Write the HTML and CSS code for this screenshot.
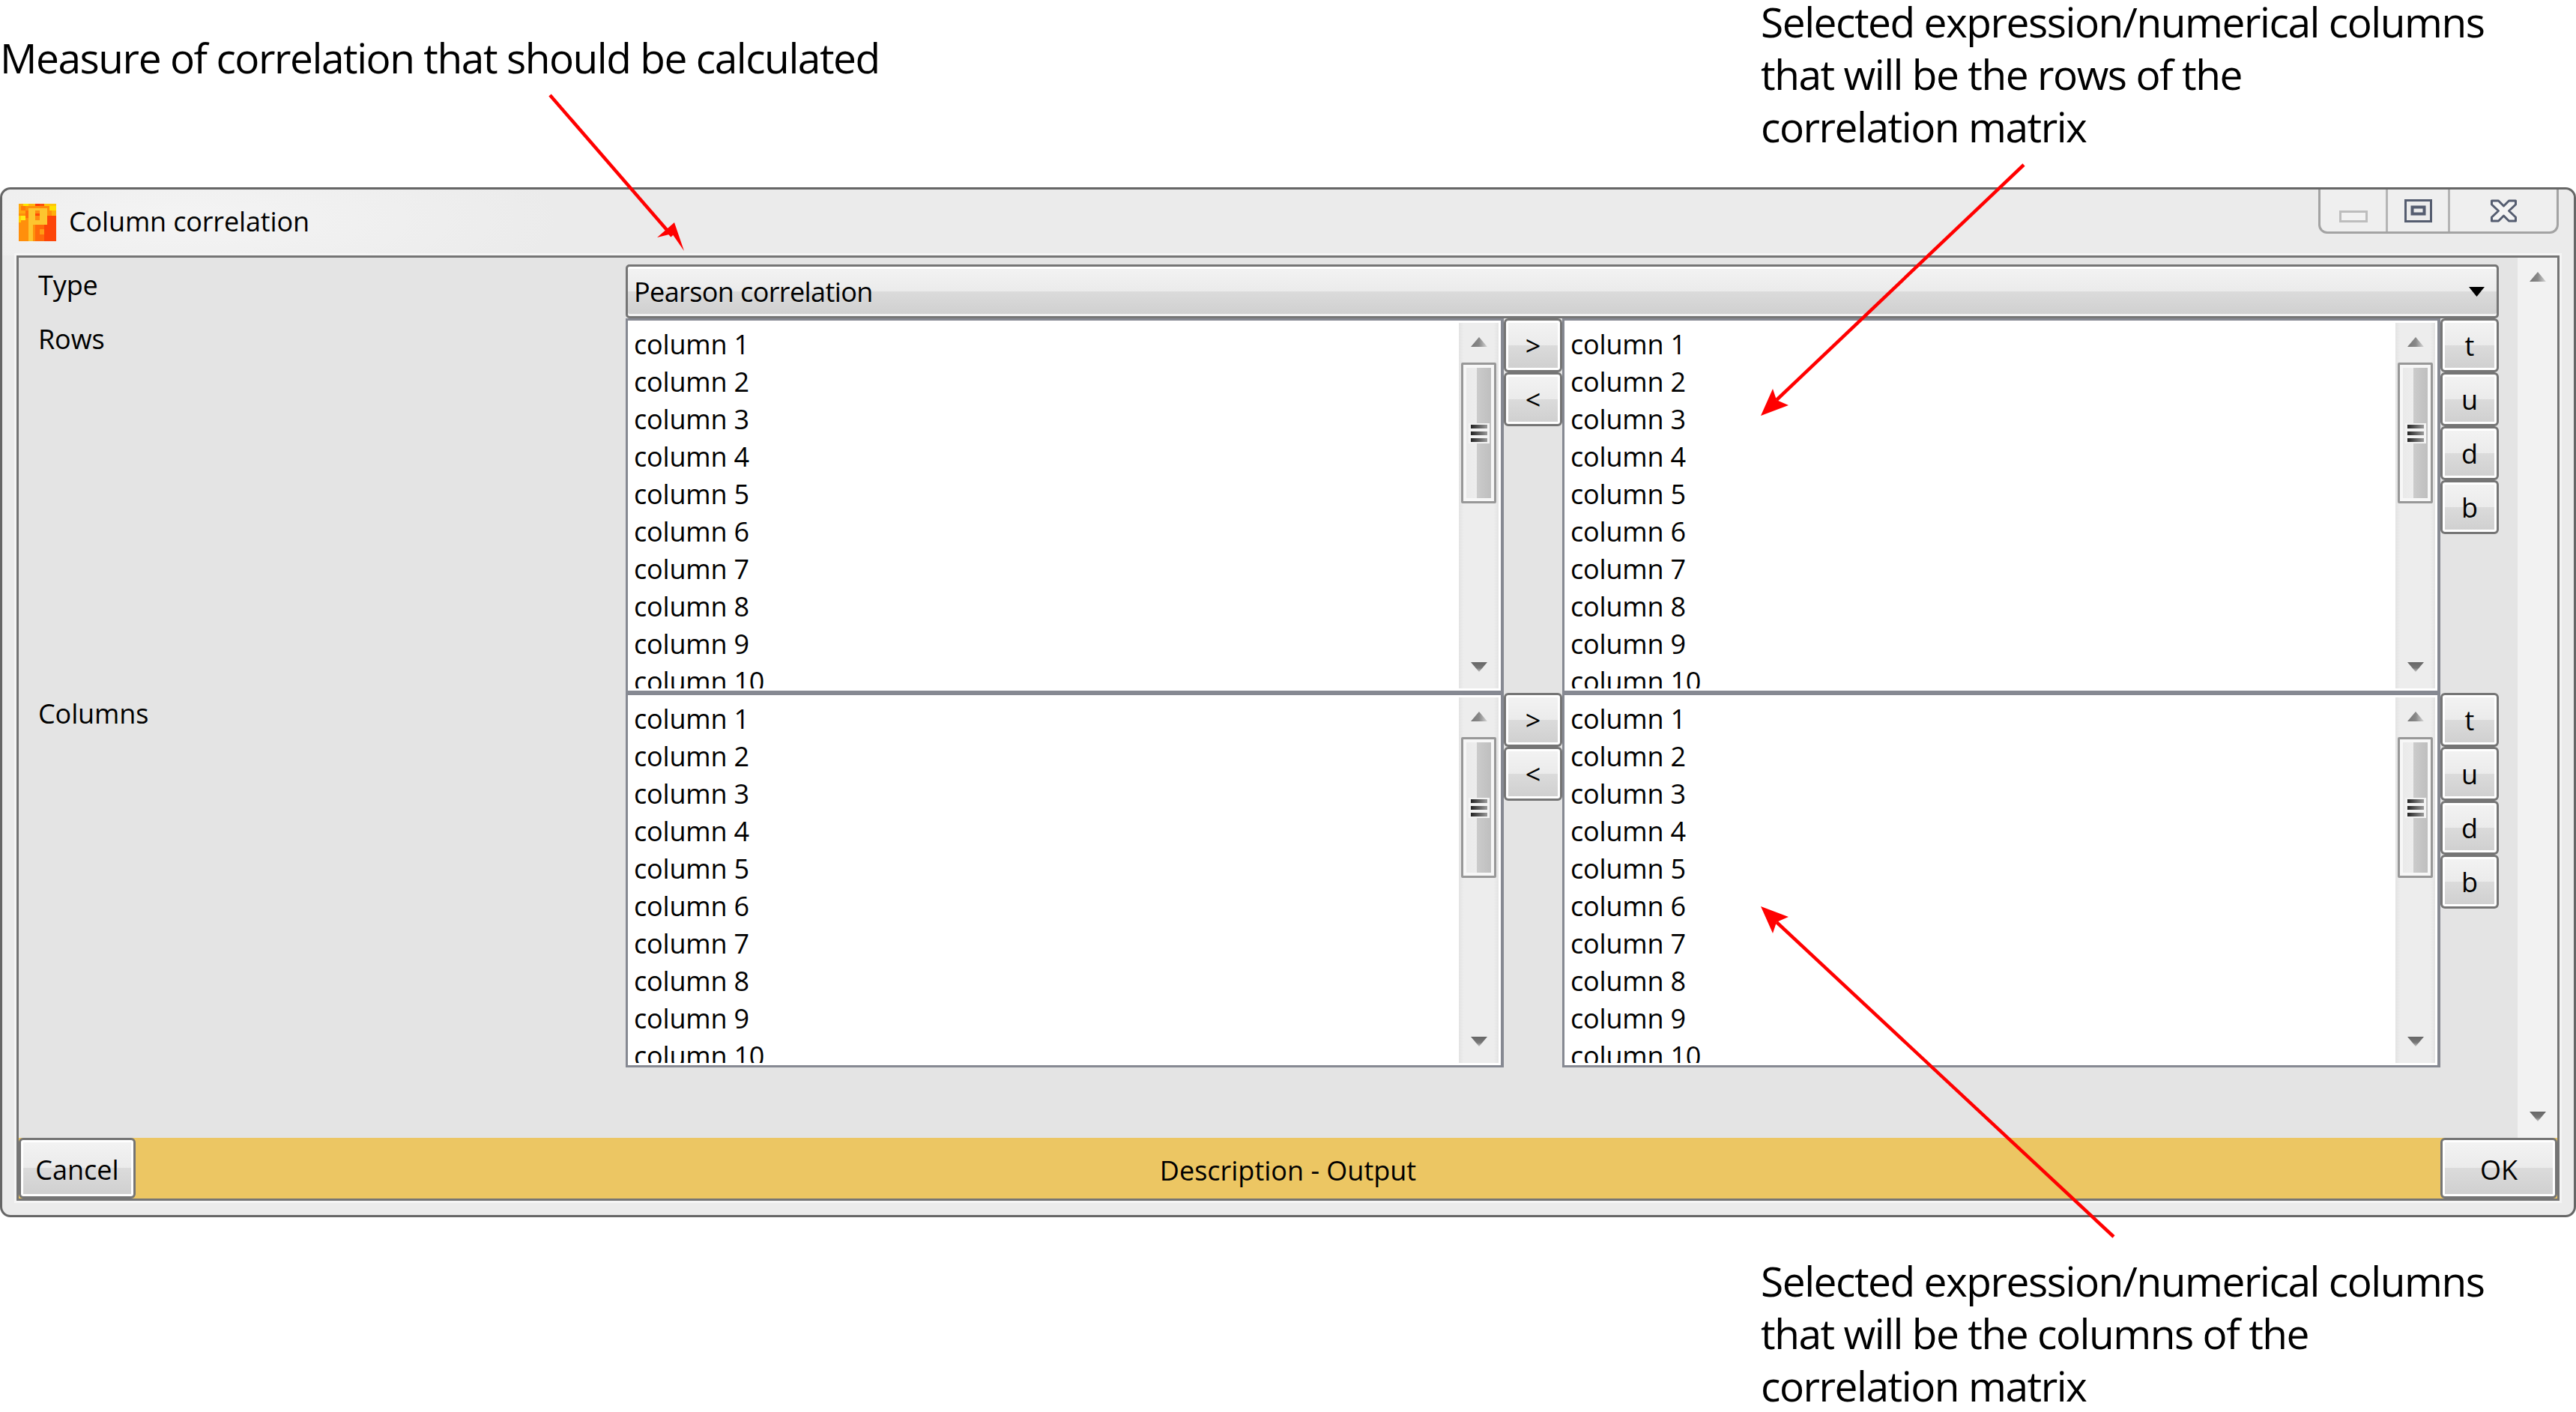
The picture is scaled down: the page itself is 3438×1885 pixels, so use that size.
FILE: index.html
```html
<!DOCTYPE html>
<html lang="en">
<head>
<meta charset="utf-8">
<title>Column correlation</title>
<link rel="stylesheet" href="styles.css">
</head>
<body>
<svg class="defs" width="0" height="0" aria-hidden="true">
  <defs>
    <linearGradient id="upg" x1="0" x2="1" y1="0" y2="0"><stop offset="0" stop-color="#777"/><stop offset=".5" stop-color="#888"/><stop offset="1" stop-color="#d5d5d5"/></linearGradient>
    <linearGradient id="dng" x1="0" x2="0" y1="0" y2="1"><stop offset="0" stop-color="#666"/><stop offset=".6" stop-color="#777"/><stop offset="1" stop-color="#c5c5c5"/></linearGradient>
    <symbol id="up" viewBox="0 0 22 13"><polygon points="11,0 22,13 0,13" fill="url(#upg)"/></symbol>
    <symbol id="down" viewBox="0 0 22 13"><polygon points="0,0 22,0 11,13" fill="url(#dng)"/></symbol>
  </defs>
</svg>

<header class="notes notes-top">
  <p class="note note-single">Measure of correlation that should be calculated</p>
  <p class="note note-raised">Selected expression/numerical columns<br>that will be the rows of the<br>correlation matrix</p>
</header>

<section class="window">
  <div class="titlebar">
    <svg class="app-icon" viewBox="0 0 16 16" shape-rendering="crispEdges" aria-hidden="true">
      <rect width="16" height="16" fill="#ff8f0c"/>
      <rect x="0" y="0" width="3" height="4" fill="#ffa70e"/>
      <rect x="2" y="0" width="2" height="1" fill="#ffe600"/>
      <rect x="0" y="5" width="1" height="3" fill="#ffd200"/>
      <rect x="1" y="1" width="2" height="2" fill="#ff7a0a"/>
      <rect x="1" y="5" width="2" height="2" fill="#ffec18"/>
      <rect x="3" y="3" width="1" height="3" fill="#ff6f0a"/>
      <rect x="4" y="0" width="3" height="1" fill="#ffb80d"/>
      <rect x="7" y="0" width="2" height="1" fill="#ff3c08"/>
      <rect x="9" y="0" width="2" height="1" fill="#ff5208"/>
      <rect x="11" y="0" width="5" height="1" fill="#ffc50a"/>
      <rect x="13" y="1" width="3" height="2" fill="#ffe000"/>
      <rect x="14" y="3" width="2" height="2" fill="#ffae0a"/>
      <rect x="9" y="1" width="4" height="1" fill="#ff8a0c"/>
      <rect x="11" y="5" width="5" height="11" fill="#fd4508"/>
      <rect x="7" y="9" width="4" height="7" fill="#ff6a0a"/>
      <rect x="9" y="11" width="2" height="2" fill="#ff9a14"/>
      <rect x="4" y="2" width="2" height="14" fill="#fdc52f"/>
      <rect x="4" y="2" width="7" height="1" fill="#fdc52f"/>
      <rect x="9" y="2" width="3" height="6" fill="#fdc52f"/>
      <rect x="6" y="7" width="6" height="2" fill="#fdc52f"/>
      <rect x="6" y="3" width="1" height="4" fill="#fdc52f"/>
      <rect x="7" y="3" width="2" height="4" fill="#ff8a10"/>
      <rect x="7" y="4" width="2" height="1" fill="#ff4a08"/>
    </svg>
    <span class="title">Column correlation</span>
    <div class="caption">
      <div class="cap cap-min">
        <svg class="cap-icon-min" viewBox="0 0 38 16" aria-hidden="true"><rect x="1.5" y="1.5" width="35" height="13" fill="#f2f2f2" stroke="#bdbdbd" stroke-width="3"/></svg>
      </div>
      <div class="cap cap-max">
        <svg class="cap-icon" viewBox="0 0 37 31" aria-hidden="true">
          <rect x="1.5" y="1.5" width="34" height="28" fill="#ececec" stroke="#555d70" stroke-width="3"/>
          <rect x="10.5" y="10.5" width="16" height="9" fill="#ececec" stroke="#555d70" stroke-width="4"/>
        </svg>
      </div>
      <div class="cap cap-close">
        <svg class="cap-icon" viewBox="0 0 36 31" aria-hidden="true">
          <polygon points="2,2 11,2 18,9 25,2 34,2 34,7 25,15.500 34,24 34,29 25,29 18,22 11,29 2,29 2,24 11,15.500 2,7" fill="#f4f4f4" stroke="#555d70" stroke-width="3" stroke-linejoin="round"/>
        </svg>
      </div>
    </div>
  </div>

  <div class="content">
    <div class="main">
      <div class="form">
        <div class="label">Type</div>
        <div class="combo">
          <span class="combo-text">Pearson correlation</span>
          <svg class="combo-arrow" viewBox="0 0 21 13" aria-hidden="true"><polygon points="0,0 21,0 10.500,13" fill="#000"/></svg>
        </div>

        <div class="label">Rows</div>
        <div class="picker">
          <div class="list">
            <div class="items">
              <div class="item">column 1</div><div class="item">column 2</div><div class="item">column 3</div><div class="item">column 4</div><div class="item">column 5</div><div class="item">column 6</div><div class="item">column 7</div><div class="item">column 8</div><div class="item">column 9</div><div class="item">column 10</div>
            </div>
            <div class="vscroll">
              <svg class="arrow arrow-up"><use href="#up"/></svg>
              <div class="thumb"><div class="grip"><i></i><i></i><i></i></div></div>
              <svg class="arrow arrow-down"><use href="#down"/></svg>
            </div>
          </div>
          <div class="btns"><button class="btn">&gt;</button><button class="btn">&lt;</button></div>
          <div class="list">
            <div class="items">
              <div class="item">column 1</div><div class="item">column 2</div><div class="item">column 3</div><div class="item">column 4</div><div class="item">column 5</div><div class="item">column 6</div><div class="item">column 7</div><div class="item">column 8</div><div class="item">column 9</div><div class="item">column 10</div>
            </div>
            <div class="vscroll">
              <svg class="arrow arrow-up"><use href="#up"/></svg>
              <div class="thumb"><div class="grip"><i></i><i></i><i></i></div></div>
              <svg class="arrow arrow-down"><use href="#down"/></svg>
            </div>
          </div>
          <div class="btns"><button class="btn">t</button><button class="btn">u</button><button class="btn">d</button><button class="btn">b</button></div>
        </div>

        <div class="label">Columns</div>
        <div class="picker">
          <div class="list">
            <div class="items">
              <div class="item">column 1</div><div class="item">column 2</div><div class="item">column 3</div><div class="item">column 4</div><div class="item">column 5</div><div class="item">column 6</div><div class="item">column 7</div><div class="item">column 8</div><div class="item">column 9</div><div class="item">column 10</div>
            </div>
            <div class="vscroll">
              <svg class="arrow arrow-up"><use href="#up"/></svg>
              <div class="thumb"><div class="grip"><i></i><i></i><i></i></div></div>
              <svg class="arrow arrow-down"><use href="#down"/></svg>
            </div>
          </div>
          <div class="btns"><button class="btn">&gt;</button><button class="btn">&lt;</button></div>
          <div class="list">
            <div class="items">
              <div class="item">column 1</div><div class="item">column 2</div><div class="item">column 3</div><div class="item">column 4</div><div class="item">column 5</div><div class="item">column 6</div><div class="item">column 7</div><div class="item">column 8</div><div class="item">column 9</div><div class="item">column 10</div>
            </div>
            <div class="vscroll">
              <svg class="arrow arrow-up"><use href="#up"/></svg>
              <div class="thumb"><div class="grip"><i></i><i></i><i></i></div></div>
              <svg class="arrow arrow-down"><use href="#down"/></svg>
            </div>
          </div>
          <div class="btns"><button class="btn">t</button><button class="btn">u</button><button class="btn">d</button><button class="btn">b</button></div>
        </div>
      </div>
      <div class="page-scroll">
        <svg class="arrow arrow-up"><use href="#up"/></svg>
        <svg class="arrow arrow-down"><use href="#down"/></svg>
      </div>
    </div>
    <footer class="footer">
      <button class="btn btn-wide">Cancel</button>
      <div class="status">Description - Output</div>
      <button class="btn btn-wide">OK</button>
    </footer>
  </div>
</section>

<footer class="notes notes-bottom">
  <p class="note">Selected expression/numerical columns<br>that will be the columns of the<br>correlation matrix</p>
</footer>

<svg class="callouts" viewBox="0 0 3438 1885" aria-hidden="true">
  <line x1="734" y1="127" x2="897" y2="315"/>
  <polygon points="913,335 900,297 877,317 897,312"/>
  <line x1="2701" y1="220" x2="2371" y2="534"/>
  <polygon points="2350,555 2366,519 2371,534 2387,541"/>
  <line x1="2821" y1="1651" x2="2371" y2="1231"/>
  <polygon points="2350,1210 2366,1246 2371,1231 2387,1224"/>
</svg>
</body>
</html>
```

FILE: styles.css
```css
* { box-sizing: border-box; }

html, body {
  margin: 0;
  width: 3438px;
  height: 1885px;
  overflow: hidden;
  background: #fff;
}

body {
  position: relative;
  font-family: "Open Sans", "Noto Sans", sans-serif;
  color: #000;
}

.defs { position: absolute; }

/* annotations */
.notes { display: grid; }
.notes-top {
  grid-template-columns: 2350px 1fr;
  height: 250px;
}
.notes-bottom {
  grid-template-columns: 1fr;
  padding-left: 2350px;
  margin-top: 50px;
}
.note {
  margin: 0;
  font-size: 55px;
  line-height: 70px;
  letter-spacing: -1.45px;
  white-space: nowrap;
}
.note-single { padding: 42px 0 0 0; }
.note-raised { margin-top: -6px; }

/* window */
.window {
  display: flex;
  flex-direction: column;
  height: 1375px;
  border: 3px solid #666;
  border-radius: 14px;
  background: #ebebeb;
  box-shadow: inset 0 3px 0 #f7f7f7;
}
.titlebar {
  display: flex;
  height: 88px;
  padding-left: 22px;
  background: radial-gradient(ellipse 500px 120px at 250px 40px, #f4f4f4, #ebebeb 100%);
  border-radius: 12px 12px 0 0;
}
.app-icon {
  width: 50px;
  height: 50px;
  margin-top: 19px;
}
.title {
  margin: 18px 0 0 17px;
  font-size: 36px;
  line-height: 49px;
  letter-spacing: -0.15px;
}
.caption {
  display: flex;
  width: 321px;
  height: 59px;
  margin-left: auto;
  margin-right: 20px;
  border: 3px solid #a3a3a3;
  border-top: 0;
  border-radius: 0 0 12px 12px;
  background: #efefef;
}
.cap {
  display: flex;
  justify-content: center;
  padding-top: 13px;
}
.cap-min { width: 90px; border-right: 3px solid #b5b5b5; padding-top: 28px; }
.cap-max { width: 83px; border-right: 3px solid #b5b5b5; }
.cap-close { flex: 1; }
.cap-icon-min { width: 38px; height: 16px; }
.cap-icon { width: 37px; height: 31px; }

/* content */
.content {
  display: flex;
  flex-direction: column;
  height: 1262px;
  margin: 0 19px;
  border: 3px solid #757575;
  background: #e4e4e4;
  box-shadow: 0 0 0 3px #f5f5f5;
}
.main {
  display: flex;
  flex: 1;
  min-height: 0;
}
.form {
  display: grid;
  flex: 1;
  grid-template-columns: 810px 2500px;
  grid-template-rows: 72px 500px 500px;
  padding-top: 9px;
  font-size: 36px;
  line-height: 50px;
}
.label {
  padding: 3px 0 0 26px;
  letter-spacing: -0.1px;
}

.combo {
  display: flex;
  align-items: center;
  justify-content: space-between;
  padding: 1px 16px 0 8px;
  border: 3px solid #757575;
  border-radius: 5px;
  background: linear-gradient(#f3f3f3, #ebebeb 50%, #dbdbdb 50%, #cfcfcf);
  box-shadow: inset 0 3px 0 #fff, inset 0 -3px 0 #f2f2f2;
}
.combo-text { letter-spacing: -0.6px; }
.combo-arrow { width: 21px; height: 13px; }

.picker { display: flex; }
.list {
  display: flex;
  width: 1172px;
  padding: 3px;
  border: solid #868992;
  border-width: 3px 4px 3px 3px;
  background: #fff;
}
.items {
  flex: 1;
  min-width: 0;
  overflow: hidden;
  padding: 4px 0 0 5px;
  white-space: nowrap;
  letter-spacing: -0.2px;
}
.item { height: 50px; }

.vscroll {
  display: flex;
  flex-direction: column;
  align-items: center;
  width: 53px;
  background: linear-gradient(90deg, #e3e3e3, #ededed 12%, #ededed 88%, #e3e3e3);
}
.arrow {
  display: block;
  flex: none;
  width: 22px;
  height: 13px;
}
.arrow-up { margin-top: 19px; }
.arrow-down { margin-top: auto; margin-bottom: 22px; }

.thumb {
  display: flex;
  align-items: center;
  justify-content: center;
  width: 47px;
  height: 188px;
  margin-top: 21px;
  border: 3px solid #989898;
  border-radius: 2px;
  background: linear-gradient(90deg, #e9e9e9, #ededed 45%, #cbcbcb 45%, #bcbcbc);
  box-shadow: inset 0 0 0 4px #f7f7f7;
}
.grip {
  display: flex;
  flex-direction: column;
  gap: 4px;
  width: 28px;
  padding: 2px 3px;
  background: #f3f3f3;
}
.grip i {
  display: block;
  height: 5px;
  background: linear-gradient(90deg, #222, #9a9a9a);
}

.btns {
  display: flex;
  flex-direction: column;
  align-items: stretch;
  width: 78px;
}
.btn {
  flex: none;
  height: 72px;
  padding: 2px 0 0;
  border: 3px solid #757575;
  border-radius: 6px;
  background: linear-gradient(#f3f3f3, #ebebeb 50%, #dbdbdb 50%, #cfcfcf);
  box-shadow: inset 0 0 0 3px #fff;
  color: #000;
  font: inherit;
  font-size: 36px;
  line-height: 50px;
}
.btn-wide {
  width: 156px;
  height: 81px;
  padding-top: 4px;
}

.page-scroll {
  display: flex;
  flex-direction: column;
  align-items: center;
  width: 53px;
  background: #f2f2f2;
}

.footer {
  display: flex;
  height: 81px;
  flex: none;
  background: #ecc663;
  font-size: 36px;
}
.status {
  flex: 1;
  text-align: center;
  line-height: 88px;
}

.callouts {
  position: absolute;
  left: 0;
  top: 0;
  width: 3438px;
  height: 1885px;
  pointer-events: none;
}
.callouts line { stroke: #f00; stroke-width: 4.5; }
.callouts polygon { fill: #f00; }
```
